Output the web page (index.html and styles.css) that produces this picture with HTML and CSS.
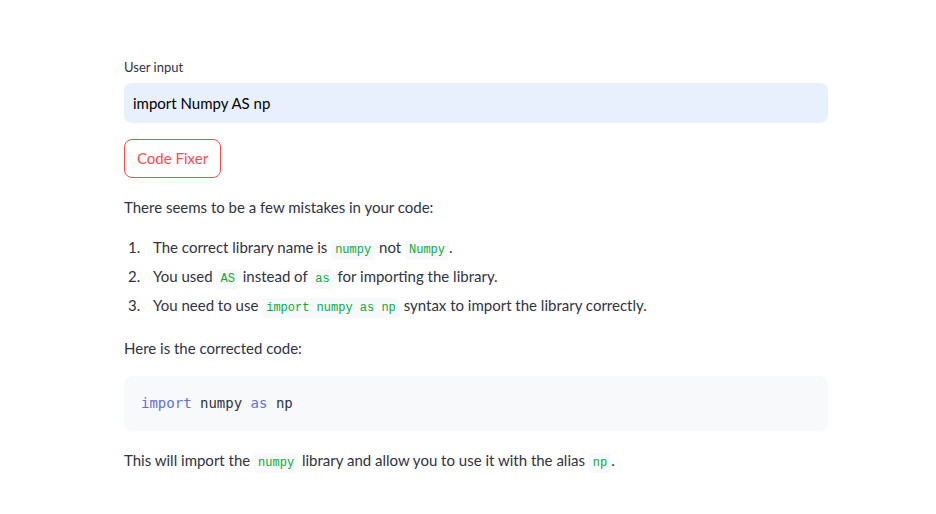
FILE: index.html
```html
<!DOCTYPE html>
<html>
<head>
<meta charset="utf-8">
<link rel="stylesheet" href="styles.css">
</head>
<body>
<main class="main">
  <div class="field">
    <label class="label">User input</label>
    <div class="input">import Numpy AS np</div>
  </div>
  <button class="btn">Code Fixer</button>
  <div class="md">
    <p class="p">There seems to be a few mistakes in your code:</p>
    <ol class="list">
      <li>The correct library name is <code class="ic">numpy</code> not <code class="ic">Numpy</code>.</li>
      <li>You used <code class="ic">AS</code> instead of <code class="ic">as</code> for importing the library.</li>
      <li>You need to use <code class="ic">import numpy as np</code> syntax to import the library correctly.</li>
    </ol>
    <p class="p">Here is the corrected code:</p>
    <pre class="block"><code><span class="kw">import</span> numpy <span class="kw">as</span> np</code></pre>
    <p class="p">This will import the <code class="ic">numpy</code> library and allow you to use it with the alias <code class="ic">np</code>.</p>
  </div>
</main>
</body>
</html>
```

FILE: styles.css
```css
html, body {
  margin: 0;
  padding: 0;
  background: #ffffff;
}
body {
  font-family: "Source Sans Pro", Lato, "Liberation Sans", sans-serif;
  color: rgb(49, 51, 63);
}
.main {
  width: 704px;
  padding: 57px 0 0 124px;
  display: flex;
  flex-direction: column;
}
.field {
  display: flex;
  flex-direction: column;
}
.label {
  font-size: 13px;
  line-height: 20px;
  height: 20px;
  margin-bottom: 6px;
}
.input {
  height: 40px;
  box-sizing: border-box;
  background: rgb(232, 240, 254);
  border-radius: 8px;
  padding: 0 9px;
  font-size: 15px;
  line-height: 40px;
  color: rgb(0, 0, 0);
}
.btn {
  align-self: flex-start;
  margin-top: 16px;
  height: 39px;
  padding: 0 12px;
  background: #fff;
  border: 1px solid rgb(255, 75, 75);
  border-radius: 8px;
  color: rgb(255, 75, 75);
  font-family: inherit;
  font-size: 15px;
  line-height: 37px;
}
.md {
  margin-top: 17px;
  font-size: 15px;
  line-height: 24px;
}
.p {
  margin: 0 0 16px 0;
}
.list {
  margin: 0 0 19px 0;
  padding-left: 29px;
  list-style: none;
  counter-reset: item;
}
.list li {
  margin: 0 0 5px 0;
  counter-increment: item;
}
.list li::before {
  content: counter(item) ".";
  display: inline-block;
  width: 25px;
  margin-left: -25px;
}
.ic {
  font-family: "Liberation Mono", "DejaVu Sans Mono", monospace;
  font-size: 12px;
  line-height: 1;
  color: rgb(9, 171, 59);
  background: rgb(248, 249, 251);
  border-radius: 4px;
  padding: 3px 4px;
}
.block {
  margin: 6px 0 17px 0;
  background: rgb(248, 249, 251);
  border-radius: 8px;
  padding: 16px 17px;
  font-family: "Liberation Mono", "DejaVu Sans Mono", monospace;
  font-size: 14px;
  line-height: 22px;
  color: rgb(49, 51, 63);
}
.kw {
  color: rgb(96, 112, 228);
}
```
